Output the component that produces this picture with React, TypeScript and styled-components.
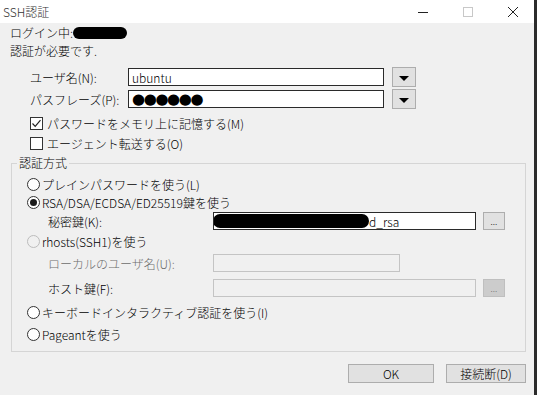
import styled, { createGlobalStyle } from 'styled-components';

const GlobalStyle = createGlobalStyle`
  html, body {
    margin: 0;
    padding: 0;
    background: #f0f0f0;
  }
  body {
    font-family: "Noto Sans CJK JP", "Liberation Sans", sans-serif;
    font-size: 12px;
    font-weight: 300;
    color: #000;
  }
`;

const Window = styled.div`
  width: 534px;
  height: 395px;
  border-right: 3px solid #2b2b2b;
  background: #f0f0f0;
  display: flex;
  flex-direction: column;
  overflow: hidden;
`;

const TitleBar = styled.div`
  height: 23px;
  flex: none;
  background: #fff;
  display: flex;
  align-items: center;
  padding-left: 3px;
`;

const Title = styled.div`
  flex: 1;
  color: #333;
  line-height: 16px;
`;

const Controls = styled.div`
  display: flex;
  align-items: center;
  gap: 35px;
  padding-right: 16px;
`;

const Body = styled.div`
  display: flex;
  flex-direction: column;
  padding: 0 8px 0 10px;
`;

const Line = styled.div<{ $top: number }>`
  height: 16px;
  line-height: 16px;
  margin-top: ${(p) => p.$top}px;
  display: flex;
  align-items: center;
  white-space: nowrap;
`;

const Redact = styled.span<{ $w: number; $h?: number }>`
  display: inline-block;
  width: ${(p) => p.$w}px;
  height: ${(p) => p.$h ?? 12}px;
  background: #000;
  border-radius: 7px;
  flex: none;
`;

const FieldRow = styled.div<{ $top: number }>`
  display: flex;
  align-items: center;
  height: 20px;
  margin-top: ${(p) => p.$top}px;
  padding-left: 20px;
`;

const FieldLabel = styled.span<{ $w: number; $disabled?: boolean }>`
  width: ${(p) => p.$w}px;
  flex: none;
  white-space: nowrap;
  color: ${(p) => (p.$disabled ? '#6d6d6d' : '#000')};
`;

const TextBox = styled.div<{ $w: number; $disabled?: boolean }>`
  width: ${(p) => p.$w}px;
  height: 18px;
  box-sizing: border-box;
  flex: none;
  border: 1px solid ${(p) => (p.$disabled ? '#c4c4c4' : '#2a2a2a')};
  background: ${(p) => (p.$disabled ? '#f0f0f0' : '#fff')};
  display: flex;
  align-items: center;
  padding-left: 3px;
  overflow: hidden;
  white-space: nowrap;
`;

const Dots = styled.span`
  font-family: "DejaVu Sans", sans-serif;
  font-weight: 400;
  font-size: 15px;
  letter-spacing: -1.4px;
  line-height: 16px;
`;

const DropButton = styled.div`
  width: 24px;
  height: 20px;
  margin-left: 8px;
  box-sizing: border-box;
  border: 1px solid #adadad;
  background: #e1e1e1;
  display: flex;
  align-items: center;
  justify-content: center;
  padding-top: 2px;
`;

const Triangle = styled.span`
  width: 0;
  height: 0;
  border-left: 5px solid transparent;
  border-right: 5px solid transparent;
  border-top: 5px solid #000;
`;

const CheckRow = styled.label<{ $top: number }>`
  display: flex;
  align-items: center;
  gap: 4px;
  height: 16px;
  margin-top: ${(p) => p.$top}px;
  padding-left: 20px;
  white-space: nowrap;
`;

const CheckBox = styled.span`
  width: 13px;
  height: 13px;
  box-sizing: border-box;
  border: 1px solid #333;
  background: #fff;
  display: flex;
  align-items: center;
  justify-content: center;
  flex: none;
`;

const Group = styled.fieldset`
  margin: 4px 0 0 1px;
  padding: 0;
  border: 1px solid #d5d5d5;
  min-width: 0;
`;

const Legend = styled.legend`
  margin-left: 5px;
  padding: 0 2px;
  line-height: 16px;
  height: 16px;
`;

const GroupBody = styled.div`
  display: flex;
  flex-direction: column;
  padding: 4px 0 6px 15px;
`;

const OptionRow = styled.label<{ $h: number }>`
  display: flex;
  align-items: center;
  gap: 2px;
  height: ${(p) => p.$h}px;
  white-space: nowrap;
`;

const Radio = styled.span<{ $checked?: boolean; $disabled?: boolean }>`
  width: 13px;
  height: 13px;
  box-sizing: border-box;
  border-radius: 50%;
  border: 1px solid ${(p) => (p.$disabled ? '#bcbcbc' : '#333')};
  background: ${(p) => (p.$disabled ? '#f0f0f0' : '#fff')};
  display: flex;
  align-items: center;
  justify-content: center;
  flex: none;

  &::after {
    content: '';
    display: ${(p) => (p.$checked ? 'block' : 'none')};
    width: 7px;
    height: 7px;
    border-radius: 50%;
    background: #1a1a1a;
  }
`;

const SubRow = styled.div<{ $h: number }>`
  display: flex;
  align-items: center;
  height: ${(p) => p.$h}px;
  padding-left: 21px;
`;

const BrowseButton = styled.div<{ $disabled?: boolean }>`
  width: 22px;
  height: 18px;
  margin-left: 7px;
  box-sizing: border-box;
  border: 1px solid ${(p) => (p.$disabled ? '#bfbfbf' : '#adadad')};
  background: ${(p) => (p.$disabled ? '#cccccc' : '#e1e1e1')};
  color: ${(p) => (p.$disabled ? '#6d6d6d' : '#000')};
  font-size: 9px;
  line-height: 18px;
  text-align: center;
  flex: none;
`;

const Footer = styled.div`
  display: flex;
  justify-content: flex-end;
  gap: 12px;
  margin-top: 12px;
`;

const Button = styled.div<{ $w: number }>`
  width: ${(p) => p.$w}px;
  height: 19px;
  box-sizing: border-box;
  border: 1px solid #adadad;
  background: #e1e1e1;
  display: flex;
  align-items: center;
  justify-content: center;
  line-height: 16px;
`;

export default function App() {
  return (
    <>
      <GlobalStyle />
      <Window>
        <TitleBar>
          <Title>SSH認証</Title>
          <Controls>
            <svg width="10" height="10" viewBox="0 0 10 10">
              <line x1="0" y1="5.5" x2="10" y2="5.5" stroke="#222" strokeWidth="1" />
            </svg>
            <svg width="10" height="10" viewBox="0 0 10 10">
              <rect x="0.5" y="0.5" width="9" height="9" fill="none" stroke="#c8c8c8" strokeWidth="1" />
            </svg>
            <svg width="10" height="10" viewBox="0 0 10 10">
              <path d="M0 0 L10 10 M10 0 L0 10" stroke="#222" strokeWidth="1" />
            </svg>
          </Controls>
        </TitleBar>

        <Body>
          <Line $top={2}>
            ログイン中:<Redact $w={54} $h={12} />
          </Line>
          <Line $top={2}>認証が必要です.</Line>

          <FieldRow $top={8}>
            <FieldLabel $w={98}>ユーザ名(N):</FieldLabel>
            <TextBox $w={256}>ubuntu</TextBox>
            <DropButton>
              <Triangle />
            </DropButton>
          </FieldRow>
          <FieldRow $top={2}>
            <FieldLabel $w={98}>パスフレーズ(P):</FieldLabel>
            <TextBox $w={256}>
              <Dots>●●●●●●</Dots>
            </TextBox>
            <DropButton>
              <Triangle />
            </DropButton>
          </FieldRow>

          <CheckRow $top={6}>
            <CheckBox>
              <svg width="11" height="11" viewBox="0 0 11 11">
                <path d="M1.5 5.5 L4.2 8.3 L9.5 2.2" fill="none" stroke="#222" strokeWidth="1.2" />
              </svg>
            </CheckBox>
            パスワードをメモリ上に記憶する(M)
          </CheckRow>
          <CheckRow $top={4}>
            <CheckBox />
            エージェント転送する(O)
          </CheckRow>

          <Group>
            <Legend>認証方式</Legend>
            <GroupBody>
              <OptionRow $h={18}>
                <Radio />
                プレインパスワードを使う(L)
              </OptionRow>
              <OptionRow $h={18}>
                <Radio $checked />
                RSA/DSA/ECDSA/ED25519鍵を使う
              </OptionRow>
              <SubRow $h={20}>
                <FieldLabel $w={165}>秘密鍵(K):</FieldLabel>
                <TextBox $w={263}>
                  <Redact $w={156} $h={14} style={{ marginLeft: -4 }} />
                  d_rsa
                </TextBox>
                <BrowseButton>...</BrowseButton>
              </SubRow>
              <OptionRow $h={20}>
                <Radio $disabled />
                rhosts(SSH1)を使う
              </OptionRow>
              <SubRow $h={24}>
                <FieldLabel $w={165} $disabled>
                  ローカルのユーザ名(U):
                </FieldLabel>
                <TextBox $w={187} $disabled />
              </SubRow>
              <SubRow $h={26}>
                <FieldLabel $w={165}>ホスト鍵(F):</FieldLabel>
                <TextBox $w={263} $disabled />
                <BrowseButton $disabled>...</BrowseButton>
              </SubRow>
              <OptionRow $h={22}>
                <Radio />
                キーボードインタラクティブ認証を使う(I)
              </OptionRow>
              <OptionRow $h={22}>
                <Radio />
                Pageantを使う
              </OptionRow>
            </GroupBody>
          </Group>

          <Footer>
            <Button $w={86}>OK</Button>
            <Button $w={80}>接続断(D)</Button>
          </Footer>
        </Body>
      </Window>
    </>
  );
}
